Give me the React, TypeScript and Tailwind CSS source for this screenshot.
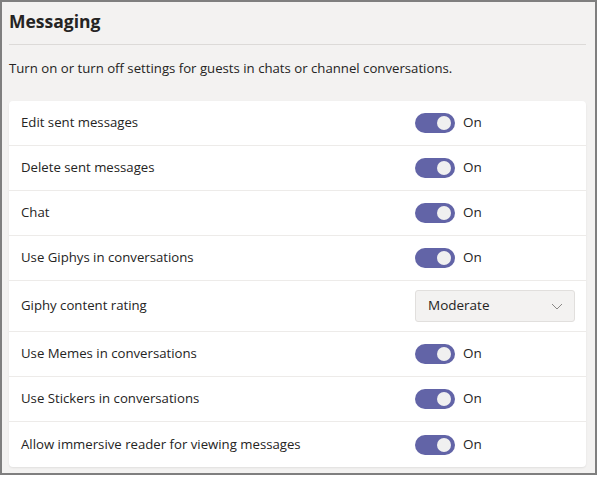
import React from 'react';

const rows: { label: string; kind: 'toggle' | 'select' }[] = [
  { label: 'Edit sent messages', kind: 'toggle' },
  { label: 'Delete sent messages', kind: 'toggle' },
  { label: 'Chat', kind: 'toggle' },
  { label: 'Use Giphys in conversations', kind: 'toggle' },
  { label: 'Giphy content rating', kind: 'select' },
  { label: 'Use Memes in conversations', kind: 'toggle' },
  { label: 'Use Stickers in conversations', kind: 'toggle' },
  { label: 'Allow immersive reader for viewing messages', kind: 'toggle' },
];

function Toggle() {
  return (
    <div className="flex items-center gap-2">
      <div className="w-[40px] h-[20px] rounded-full bg-[#6264a7] flex items-center justify-end pr-[4px]">
        <div className="w-[14px] h-[14px] rounded-full bg-[#f0f0f0]" />
      </div>
      <span className="text-[13.5px] text-[#252423] leading-[18px] -mt-[2px]">On</span>
    </div>
  );
}

function Select() {
  return (
    <div className="w-[160px] h-[32px] rounded-[3px] border border-[#e1dfdd] bg-[#f3f2f1] flex items-center justify-between pl-[12px] pr-[10px]">
      <span className="text-[13.5px] text-[#252423] -mt-[1px]">Moderate</span>
      <svg width="14" height="14" viewBox="0 0 14 14" fill="none">
        <path d="M2 5 L7 10 L12 5" stroke="#8a8886" strokeWidth="1" />
      </svg>
    </div>
  );
}

export default function App() {
  return (
    <div
      className="w-[597px] h-[475px] border-2 border-[#7f7f7f] bg-[#f3f2f1] pl-[7px] pr-[9px]"
      style={{ fontFamily: '"Open Sans", "Noto Sans", sans-serif' }}
    >
      <h1 className="text-[17.5px] font-bold text-[#252423] pt-[6px] h-[42px] leading-[26px]">Messaging</h1>
      <div className="border-t border-[#dcdad8]" />
      <p className="text-[13.2px] text-[#252423] mt-[13px] leading-[20px]">
        Turn on or turn off settings for guests in chats or channel conversations.
      </p>
      <div className="mt-[23px] bg-white rounded-[4px] shadow-[0_1px_2px_rgba(0,0,0,0.08)]">
        {rows.map((r, i) => (
          <div
            key={r.label}
            className={`flex items-center pl-[12px] ${r.kind === 'select' ? 'h-[51px]' : 'h-[45px]'} ${
              i < rows.length - 1 ? 'border-b border-[#edebe9]' : ''
            }`}
          >
            <span className="w-[394px] text-[13.2px] text-[#252423]">{r.label}</span>
            {r.kind === 'toggle' ? <Toggle /> : <Select />}
          </div>
        ))}
      </div>
    </div>
  );
}
